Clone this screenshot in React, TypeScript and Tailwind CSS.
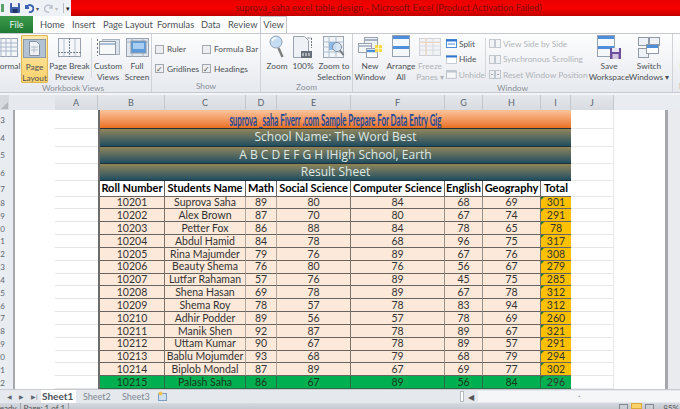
import type { ReactNode } from "react";

const rows: [string, string, string, string, string, string, string, string][] = [
  ["10201", "Suprova Saha", "89", "80", "84", "68", "69", "301"],
  ["10202", "Alex Brown", "87", "70", "80", "67", "74", "291"],
  ["10203", "Petter Fox", "86", "88", "84", "78", "65", "78"],
  ["10204", "Abdul Hamid", "84", "78", "68", "96", "75", "317"],
  ["10205", "Rina Majumder", "79", "76", "89", "67", "76", "308"],
  ["10206", "Beauty Shema", "76", "80", "76", "56", "67", "279"],
  ["10207", "Lutfar Rahaman", "57", "76", "89", "45", "75", "285"],
  ["10208", "Shena Hasan", "69", "78", "89", "67", "78", "312"],
  ["10209", "Shema Roy", "78", "57", "78", "83", "94", "312"],
  ["10210", "Adhir Podder", "89", "56", "57", "78", "69", "260"],
  ["10211", "Manik Shen", "92", "87", "78", "89", "67", "321"],
  ["10212", "Uttam Kumar", "90", "67", "78", "89", "57", "291"],
  ["10213", "Bablu Mojumder", "93", "68", "79", "68", "79", "294"],
  ["10214", "Biplob Mondal", "87", "89", "67", "69", "77", "302"],
  ["10215", "Palash Saha", "86", "67", "89", "56", "84", "296"],
];

const columns: [string, string][] = [
  ["A", "w-[43px]"],
  ["B", "w-[67px]"],
  ["C", "w-[81px]"],
  ["D", "w-[31px]"],
  ["E", "w-[74px]"],
  ["F", "w-[94px]"],
  ["G", "w-[38px]"],
  ["H", "w-[58px]"],
  ["I", "w-[30px]"],
  ["J", "w-[43px]"],
];

const dataCols = ["w-[67px]", "w-[81px]", "w-[31px]", "w-[74px]", "w-[94px]", "w-[38px]", "w-[58px]"];
const vEdge = ["border-[#7a726c]", "border-[#b0a69e]", "border-[#b0a69e]", "border-[#7a726c]", "border-[#9a918a]", "border-[#9a918a]", "border-[#7a726c]"];
const headers = ["Roll Number", "Students Name", "Math", "Social Science", "Computer Science", "English", "Geography"];

// ribbon drawings
const GridIcon = ({ w = 22 }: { w?: number }) => (
  <svg width={w} height="19" viewBox="0 0 22 19">
    <rect x="0.5" y="0.5" width="21" height="18" fill="#f4f7fa" stroke="#9aa5b1" />
    <path d="M0 5h22M0 9h22M0 13h22M5 0v19M10 0v19M15 0v19" stroke="#a9b7c6" />
  </svg>
);

const DocIcon = () => (
  <div className="flex h-[19px] w-[23px] items-center justify-center border border-[#8d99a6] bg-[#b4c3d4]">
    <svg width="11" height="15" viewBox="0 0 11 15">
      <path d="M.5.5h7l3 3v11H.5z" fill="#eef1f5" stroke="#8793a1" />
      <path d="M2 6h7M2 9h7M5 5v7" stroke="#b5bfca" />
    </svg>
  </div>
);

const BreakIcon = () => (
  <svg width="23" height="19" viewBox="0 0 23 19">
    <rect x="0.5" y="0.5" width="22" height="18" fill="#f4f6f9" stroke="#98a3af" />
    <path d="M6 1v17M17 1v17" stroke="#b7c2ce" />
    <path d="M11.5 0v19M0 14.5h23" stroke="#6f7b88" strokeDasharray="2 1" />
  </svg>
);

const CustomIcon = () => (
  <svg width="23" height="19" viewBox="0 0 23 19">
    <rect x="5.5" y="1.5" width="17" height="15" fill="#dbe2ea" stroke="#a9b4c0" />
    <rect x="2.5" y="3.5" width="16" height="13" fill="#f6f8fa" stroke="#8f9aa6" />
    <path d="M3 6h15" stroke="#a9bed6" strokeWidth="2" />
    <path d="M.5 1v17" stroke="#6c7580" strokeDasharray="2 2" />
  </svg>
);

const FullIcon = () => (
  <svg width="23" height="19" viewBox="0 0 23 19">
    <rect x="0.5" y="0.5" width="22" height="18" fill="#dfe6ee" stroke="#98a3af" />
    <path d="M0 4h23M6 0v19M17 0v19" stroke="#aab6c3" />
    <rect x="5" y="3" width="15" height="12" fill="#5b9bdc" stroke="#8f9aa6" />
    <rect x="7" y="5" width="11" height="6" fill="#a9cdf0" />
  </svg>
);

const ZoomIcon = () => (
  <svg width="16" height="24" viewBox="0 0 16 24">
    <circle cx="7" cy="7" r="6" fill="#c5dcf2" stroke="#8ea0b3" />
    <path d="M3.5 6a3.5 3.5 0 0 1 4-3" stroke="#fff" strokeWidth="1.5" fill="none" />
    <path d="M9.5 13l4 9" stroke="#7f7f7f" strokeWidth="2.5" />
  </svg>
);

const HundredIcon = () => (
  <svg width="20" height="23" viewBox="0 0 20 23">
    <path d="M.5.5h11l4 4v17H.5z" fill="#eef2f6" stroke="#98a3af" />
    <path d="M14.5 2l4 0M18.5 2v10" stroke="#6c7580" strokeDasharray="2 1" fill="none" />
    <rect x="8" y="15" width="11" height="7" fill="#66707b" />
    <path d="M10 17v3M13 17v3M16 17v3" stroke="#f2f2f2" />
  </svg>
);

const SelectionIcon = () => (
  <svg width="22" height="23" viewBox="0 0 22 23">
    <rect x="0.5" y="0.5" width="20" height="21" fill="#f2f5f8" stroke="#9aa5b1" />
    <path d="M0 6h21M0 11h21M0 16h21M6 0v22M13 0v22" stroke="#aebccb" />
    <rect x="6" y="6" width="7" height="8" fill="#8fb7e3" />
    <circle cx="14" cy="11" r="4.5" fill="#d5e6f6" fillOpacity="0.8" stroke="#7f90a3" />
    <path d="M17 14.5l3.5 4.5" stroke="#777" strokeWidth="2" />
  </svg>
);

const NewWindowIcon = () => (
  <svg width="25" height="21" viewBox="0 0 25 21">
    <rect x="6.5" y="0.5" width="13" height="11" fill="#eef1f5" stroke="#98a3af" />
    <path d="M7 3h12" stroke="#a7b3c0" strokeWidth="2" />
    <rect x="0.5" y="6.5" width="13" height="9" fill="#f4f6f8" stroke="#98a3af" />
    <path d="M1 9h12" stroke="#b5bfcb" strokeWidth="2" />
    <rect x="8.5" y="11.5" width="11" height="9" fill="#fff" stroke="#98a3af" />
    <path d="M9 14h10" stroke="#4c8fd8" strokeWidth="2.5" />
    <rect x="17" y="8" width="7" height="7" fill="#f5d94a" />
    <path d="M20.5 8v7M17 11.5h7" stroke="#fff5b8" />
  </svg>
);

const ArrangeIcon = ({ save = false }: { save?: boolean }) => (
  <svg width={save ? 25 : 18} height="24" viewBox={save ? "0 0 25 24" : "0 0 18 24"}>
    <rect x="0.5" y="0.5" width="17" height="21" fill="#f5f8fb" stroke="#93a1b0" />
    <path d="M1 2.5h16" stroke="#4f8fda" strokeWidth="3" />
    <path d="M1 12.5h16" stroke="#4f8fda" strokeWidth="3" />
    {save && (
      <g>
        <rect x="13" y="13" width="11" height="11" fill="#6d4e9e" />
        <rect x="15" y="13" width="7" height="4" fill="#e9e4f2" />
        <rect x="15.5" y="19" width="6" height="5" fill="#cfc6e0" />
      </g>
    )}
  </svg>
);

const FreezeIcon = () => (
  <svg width="22" height="18" viewBox="0 0 22 18" opacity="0.55">
    <rect x="0.5" y="0.5" width="21" height="17" fill="#eef0f3" stroke="#aab2bb" />
    <path d="M0 4h22M0 8h22M0 12h22M7 0v18M14 0v18" stroke="#bbc2ca" />
    <path d="M0 4.5h22M7 0v18" stroke="#e6b98f" />
  </svg>
);

const SwitchIcon = () => (
  <svg width="22" height="21" viewBox="0 0 22 21">
    <rect x="0.5" y="0.5" width="10" height="8" fill="#eef1f5" stroke="#8f9aa6" />
    <rect x="11.5" y="0.5" width="10" height="8" fill="#eef1f5" stroke="#8f9aa6" />
    <rect x="0.5" y="11.5" width="10" height="9" fill="#eef1f5" stroke="#8f9aa6" />
    <rect x="8.5" y="7.5" width="12" height="9" fill="#fff" stroke="#8f9aa6" />
    <path d="M9 9.5h11" stroke="#4f8fda" strokeWidth="3" />
  </svg>
);

const SmallWin = ({ kind }: { kind: "split" | "hide" | "unhide" }) => (
  <svg width="11" height="9" viewBox="0 0 11 9" opacity={kind === "unhide" ? 0.55 : 1}>
    <rect x="0.5" y="0.5" width="10" height="8" fill="#fff" stroke={kind === "split" ? "#4f8fda" : "#99a3ae"} strokeDasharray={kind === "hide" ? "1 1" : undefined} />
    <path d="M0 1.5h11" stroke={kind === "unhide" ? "#99a3ae" : "#2f77cf"} strokeWidth="2" />
    {kind === "split" && <path d="M2 5h7" stroke="#4f8fda" />}
  </svg>
);

const SmallPair = ({ arrows = false }: { arrows?: boolean }) => (
  <svg width="12" height="9" viewBox="0 0 12 9" opacity="0.55">
    <rect x="0.5" y="0.5" width="5" height="8" fill="#eef0f3" stroke="#9aa3ad" />
    <rect x="6.5" y="0.5" width="5" height="8" fill="#eef0f3" stroke="#9aa3ad" />
    {arrows && <path d="M2 4.5h2M8 4.5h2" stroke="#5f6a75" />}
  </svg>
);

const RibbonButton = ({ icon, lines, className, dim = false }: { icon: ReactNode; lines: string[]; className: string; dim?: boolean }) => (
  <div className={`flex shrink-0 flex-col items-center ${className}`}>
    <div className="flex h-[24px] items-center justify-center">{icon}</div>
    <div className={`mt-[2px] text-center text-[8.3px] leading-[10.5px] whitespace-nowrap ${dim ? "text-[#b0b4b9]" : "text-[#4c5157]"}`}>
      {lines.map((l) => (
        <div key={l}>{l}</div>
      ))}
    </div>
  </div>
);

const RibbonGroup = ({ label, className, children }: { label: string; className: string; children: ReactNode }) => (
  <div className={`flex shrink-0 flex-col border-r border-[#cfd3d8] ${className}`}>
    <div className="flex h-[49px] pt-[1px]">{children}</div>
    <div className="text-center text-[8.3px] leading-[11px] text-[#8b9098]">{label}</div>
  </div>
);

const Check = ({ label, checked = false }: { label: string; checked?: boolean }) => (
  <div className="flex items-center gap-[3px] text-[8.3px] text-[#4c5157] whitespace-nowrap">
    <div className="flex h-[9px] w-[9px] items-center justify-center border border-[#a3a8ae] bg-[#eceef1] text-[8px] leading-none text-[#555]">
      {checked && "✓"}
    </div>
    {label}
  </div>
);

const SmallRow = ({ icon, text, dim = false }: { icon: ReactNode; text: string; dim?: boolean }) => (
  <div className={`flex h-[15.5px] items-center gap-[2px] text-[8.3px] whitespace-nowrap ${dim ? "text-[#b0b4b9]" : "text-[#4c5157]"}`}>
    {icon}
    {text}
  </div>
);

const Ribbon = () => (
  <div className="flex h-[60px] shrink-0 border-t border-b border-[#c6cad0] bg-gradient-to-b from-[#fdfdfe] to-[#e6e9ee]">
    <RibbonGroup label="Workbook Views" className="-ml-[5px] w-[157px]">
      <RibbonButton className="w-[24px]" icon={<GridIcon />} lines={["Normal"]} />
      <div className="ml-[2px] h-[48px] w-[27px] rounded-[1px] border border-[#e2b650] bg-gradient-to-b from-[#fde9ae] to-[#fbd36c]">
        <RibbonButton className="w-[25px]" icon={<DocIcon />} lines={["Page", "Layout"]} />
      </div>
      <RibbonButton className="ml-[1px] w-[41px]" icon={<BreakIcon />} lines={["Page Break", "Preview"]} />
      <div className="ml-[1px] mt-[3px] h-[40px] w-px bg-[#d5d8dc]" />
      <RibbonButton className="ml-[2px] w-[28px]" icon={<CustomIcon />} lines={["Custom", "Views"]} />
      <RibbonButton className="ml-[2px] w-[26px]" icon={<FullIcon />} lines={["Full", "Screen"]} />
    </RibbonGroup>
    <RibbonGroup label="Show" className="w-[109px]">
      <div className="grid h-[40px] grid-cols-[47px_60px] content-between pl-[3px] pt-[8px]">
        <Check label="Ruler" />
        <Check label="Formula Bar" />
        <Check label="Gridlines" checked />
        <Check label="Headings" checked />
      </div>
    </RibbonGroup>
    <RibbonGroup label="Zoom" className="w-[92px]">
      <RibbonButton className="ml-[3px] w-[26px]" icon={<ZoomIcon />} lines={["Zoom"]} />
      <RibbonButton className="w-[26px]" icon={<HundredIcon />} lines={["100%"]} />
      <RibbonButton className="w-[36px]" icon={<SelectionIcon />} lines={["Zoom to", "Selection"]} />
    </RibbonGroup>
    <RibbonGroup label="Window" className="w-[320px]">
      <RibbonButton className="ml-[2px] w-[30px]" icon={<NewWindowIcon />} lines={["New", "Window"]} />
      <RibbonButton className="ml-[1px] w-[30px]" icon={<ArrangeIcon />} lines={["Arrange", "All"]} />
      <RibbonButton className="w-[28px]" dim icon={<FreezeIcon />} lines={["Freeze", "Panes ▾"]} />
      <div className="ml-[2px] w-[39px] pt-[1px]">
        <SmallRow icon={<SmallWin kind="split" />} text="Split" />
        <SmallRow icon={<SmallWin kind="hide" />} text="Hide" />
        <SmallRow dim icon={<SmallWin kind="unhide" />} text="Unhide" />
      </div>
      <div className="mt-[3px] h-[40px] w-px bg-[#d5d8dc]" />
      <div className="ml-[3px] w-[100px] pt-[1px]">
        <SmallRow dim icon={<SmallPair />} text="View Side by Side" />
        <SmallRow dim icon={<SmallPair />} text="Synchronous Scrolling" />
        <SmallRow dim icon={<SmallPair arrows />} text="Reset Window Position" />
      </div>
      <RibbonButton className="w-[40px]" icon={<ArrangeIcon save />} lines={["Save", "Workspace"]} />
      <RibbonButton className="w-[40px]" icon={<SwitchIcon />} lines={["Switch", "Windows ▾"]} />
    </RibbonGroup>
    <RibbonGroup label="Macros" className="w-[40px]">
      <RibbonButton className="w-[40px]" icon={<ArrangeIcon />} lines={["Macros"]} />
    </RibbonGroup>
  </div>
);

const Tabs = () => (
  <div className="flex h-[17px] shrink-0 items-end bg-white text-[9.3px] text-[#4c5157]">
    <div className="flex h-[17px] w-[33px] items-center justify-center bg-gradient-to-b from-[#3d9a4c] to-[#1f7a33] text-[9px] text-[#e8f3ea]">
      File
    </div>
    <div className="ml-[7px] w-[32px] leading-[17px]">Home</div>
    <div className="w-[31px] leading-[17px]">Insert</div>
    <div className="w-[54px] leading-[17px]">Page Layout</div>
    <div className="w-[44px] leading-[17px]">Formulas</div>
    <div className="w-[27px] leading-[17px]">Data</div>
    <div className="w-[32px] leading-[17px]">Review</div>
    <div className="-mb-px h-[18px] w-[27px] border border-b-0 border-[#c6cad0] bg-[#fdfdfe] text-center leading-[16px]">View</div>
  </div>
);

const TitleBar = () => (
  <div className="flex h-4 shrink-0 bg-[#eef2f7]">
    <div className="flex w-[71px] items-center gap-[5px] pl-[1px]">
      <div className="h-[8px] w-[3px] bg-[#5aa469]" />
      <svg width="10" height="10" viewBox="0 0 10 10" className="ml-[1px]">
        <rect width="10" height="10" rx="1" fill="#3f5fa8" />
        <rect x="2" width="6" height="4" fill="#e8edf5" />
        <rect x="2.5" y="6" width="5" height="4" fill="#22356b" />
      </svg>
      <svg width="9" height="9" viewBox="0 0 9 9" fill="none" stroke="#3b63b0" strokeWidth="2">
        <path d="M1 1v3h3M1.5 4A3.5 3.5 0 1 1 4 8" />
      </svg>
      <span className="-ml-[3px] text-[6px] text-[#555]">▾</span>
      <svg width="9" height="9" viewBox="0 0 9 9" fill="none" stroke="#bcc3cc" strokeWidth="1.5">
        <path d="M8 1v3H5M7.5 4A3.5 3.5 0 1 0 5 8" />
      </svg>
      <span className="-ml-[3px] text-[6px] text-[#bbb]">▾</span>
      <div className="h-[10px] w-px bg-[#b9bec5]" />
      <span className="-ml-[3px] text-[7px] text-[#222]">▾</span>
    </div>
    <div className="flex flex-1 items-center justify-center bg-gradient-to-b from-[#e80000] via-[#fa0000] to-[#c00000] pl-[26px] text-[9.2px] text-[#7f0a0a]">
      suprova_saha excel table design - Microsoft Excel (Product Activation Failed)
    </div>
  </div>
);

const ColumnHeaders = () => (
  <div className="flex h-[15px] shrink-0 bg-[#e9ecf0] text-[9px] text-[#5c6670]">
    <div className="flex w-[55px] bg-[#e6eaee]">
      <div className="relative h-[15px] w-[9px] bg-[#d6dadf]">
        <div className="absolute right-px bottom-px h-0 w-0 border-b-[7px] border-l-[7px] border-b-[#b3b8be] border-l-transparent" />
      </div>
    </div>
    {columns.map(([name, w]) => (
      <div key={name} className={`flex items-center justify-center border-r border-[#c3c8ce] bg-gradient-to-b from-[#e4e7eb] to-[#d8dce1] ${w}`}>
        {name}
      </div>
    ))}
  </div>
);

const Row = ({ num, height, children }: { num: number; height: string; children: ReactNode }) => (
  <div className={`flex shrink-0 ${height}`}>
    <div className="flex w-[13px] shrink-0 bg-[#e9ecf0] text-[8px] text-[#5c6670]">
      <div className="flex w-[5px] items-center justify-end overflow-hidden">{num}</div>
    </div>
    <div className="w-[2px] shrink-0 bg-[#a4a7ab]" />
    <div className="w-[40px] shrink-0 bg-white" />
    <div className="w-[43px] shrink-0 border-b border-[#e4e4e4] bg-white" />
    <div className="flex w-[473px] shrink-0 border-l-2 border-[#6b6b6b]">{children}</div>
    <div className="w-[43px] shrink-0 border-r border-b border-[#e8e8e8] bg-white" />
    <div className="w-[51px] shrink-0 bg-white" />
    <div className="w-[3px] shrink-0 bg-[#a4a7ab]" />
    <div className="flex-1 bg-[#e9ebee]" />
  </div>
);

const Banner = ({ children, orange = false }: { children: ReactNode; orange?: boolean }) => (
  <div
    className={`flex flex-1 items-center justify-center overflow-hidden border-b border-[#243038] ${
      orange
        ? "bg-gradient-to-b from-[#fbc49b] to-[#e9701a]"
        : "bg-gradient-to-b from-[#8f8558] to-[#1c4d60] font-['Open_Sans',sans-serif] text-[12px] text-[#dfe9e6]"
    }`}
  >
    {children}
  </div>
);

const DataRow = ({ row, last }: { row: string[]; last: boolean }) => (
  <>
    {dataCols.map((w, i) => (
      <div
        key={w + i}
        className={`flex items-center justify-center border-r border-b text-[10.5px] leading-none ${
          i === 0 ? "w-[65px]" : w
        } ${last ? "border-[#2a6b45] bg-[#00b050] text-[#17361f]" : `${vEdge[i]} border-b-[#6a635e] bg-[#fde9d9] text-[#333]`}`}
      >
        {row[i]}
      </div>
    ))}
    <div className={`relative flex w-[30px] items-center justify-center border-b text-[10.5px] leading-none text-[#333] ${last ? "border-[#2a6b45] bg-[#00b050]" : "border-[#6a635e] bg-[#ffc000]"}`}>
      <div className="absolute top-0 left-0 h-0 w-0 border-t-[3px] border-r-[3px] border-t-[#1d7a2f] border-r-transparent" />
      {row[7]}
    </div>
  </>
);

const Sheet = () => (
  <div className="flex-1 overflow-hidden">
    <Row num={3} height="h-[19px]">
      <Banner orange>
        <span className="inline-block scale-x-[0.49] scale-y-[1.1] text-[16px] leading-none font-bold whitespace-nowrap text-[#234a9a]">
          suprova _saha Fiverr .com Sample Prepare For Data Entry Gig
        </span>
      </Banner>
    </Row>
    <Row num={4} height="h-[17.6px]">
      <Banner>School Name: The Word Best</Banner>
    </Row>
    <Row num={5} height="h-[17.4px]">
      <Banner>A B C D E F G H IHigh School, Earth</Banner>
    </Row>
    <Row num={6} height="h-[17.4px]">
      <Banner>Result Sheet</Banner>
    </Row>
    <Row num={7} height="h-[15.2px]">
      {headers.map((h, i) => (
        <div key={h} className={`flex items-center justify-center border-r border-b border-[#6a635e] bg-white text-[11px] font-bold whitespace-nowrap text-black ${i === 0 ? "w-[65px]" : dataCols[i]}`}>
          {h}
        </div>
      ))}
      <div className="flex w-[30px] items-center justify-center border-b border-[#6a635e] bg-white text-[11px] font-bold text-black">Total</div>
    </Row>
    {rows.map((row, i) => (
      <Row key={row[0]} num={8 + i} height="h-[12.83px]">
        <DataRow row={row} last={i === rows.length - 1} />
      </Row>
    ))}
  </div>
);

const BottomBars = () => (
  <>
    <div className="flex h-[14px] shrink-0 border-t border-[#c8ccd2] bg-[#e5e9ee] text-[9px] text-[#7d8690]">
      <div className="flex w-[41px] items-center gap-[7px] pl-[7px] text-[6px] text-[#5e6770]">
        <span>◀</span>
        <span>▶</span>
        <span>▶|</span>
      </div>
      <div className="w-[35px] bg-white pl-[1px] text-[10px] leading-[13px] font-bold text-[#4a5058]">Sheet1</div>
      <div className="w-[45px] pl-[7px] leading-[13px]">Sheet2</div>
      <div className="w-[37px] pl-[1px] leading-[13px]">Sheet3</div>
      <svg width="10" height="10" viewBox="0 0 10 10" className="mt-[1px]">
        <rect x="0.5" y="2.5" width="8" height="7" fill="#cfe0f2" stroke="#7c9cc0" />
        <circle cx="2.5" cy="2.5" r="2" fill="#f3c34f" />
      </svg>
      <div className="flex-1" />
      <div className="flex w-[220px] items-center">
        <div className="h-[11px] w-[4px] border border-[#b5bac0] bg-white" />
        <div className="w-[14px] text-center text-[8px] text-[#555]">◀</div>
        <div className="flex h-[11px] flex-1 items-center justify-center bg-[#f5f6f8] text-[5px] text-[#9aa0a7]">▪</div>
      </div>
    </div>
    <div className="flex h-[6px] shrink-0 overflow-hidden bg-gradient-to-b from-[#d6dae0] to-[#c4c9d0] text-[8px] leading-[10px] text-[#555]">
      <span className="-ml-[5px] border-r border-[#9fa4aa] pr-[3px]">Ready</span>
      <span className="border-r border-[#9fa4aa] px-[3px]">Page: 1 of 1</span>
      <div className="flex-1" />
      <div className="flex items-start gap-[3px] pr-[1px]">
        <div className="mt-[1px] h-[6px] w-[9px] border border-[#7f8790]" />
        <div className="h-[6px] w-[11px] border border-[#d9a93c] bg-[#fbd36c]" />
        <div className="mt-[1px] h-[6px] w-[9px] border border-[#7f8790]" />
        <span className="ml-[6px]">85%</span>
      </div>
    </div>
  </>
);

export default function App() {
  return (
    <div className="flex h-[409px] w-[680px] flex-col overflow-hidden bg-white font-['Lato',sans-serif]">
      <TitleBar />
      <Tabs />
      <Ribbon />
      <div className="h-[2px] shrink-0 bg-[#f3f4f6]" />
      <ColumnHeaders />
      <Sheet />
      <BottomBars />
    </div>
  );
}
